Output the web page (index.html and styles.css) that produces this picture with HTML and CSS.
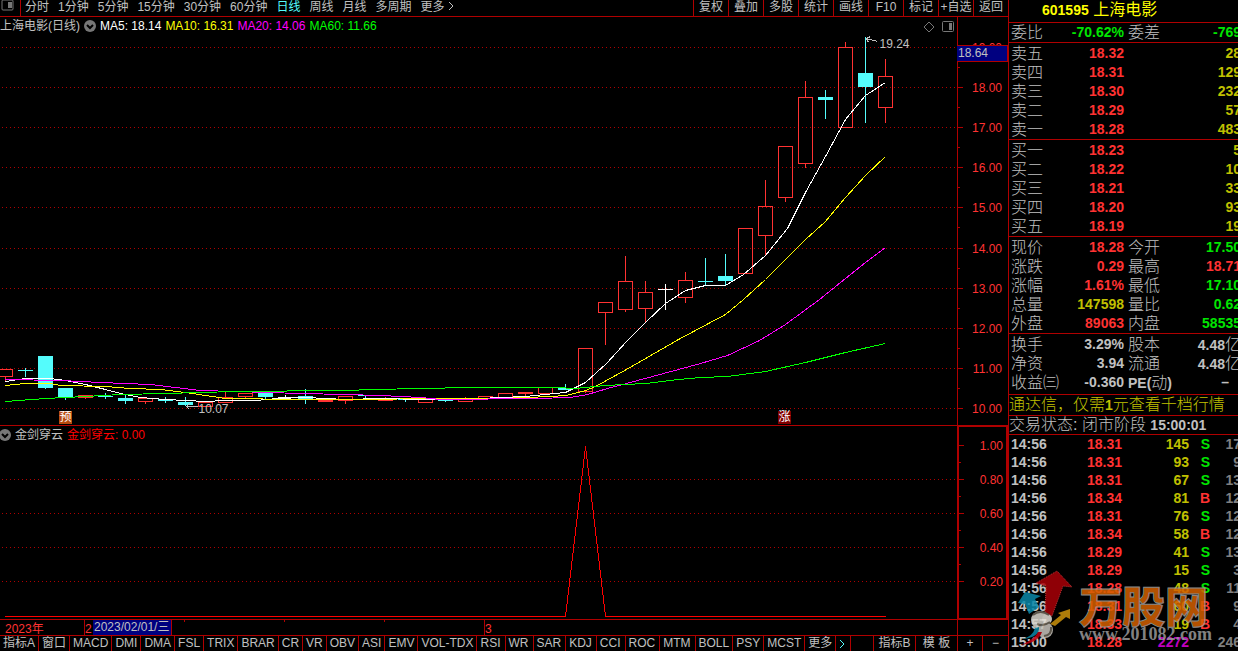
FILE: index.html
```html
<!DOCTYPE html>
<html lang="zh-CN">
  <head>
    <meta charset="UTF-8" />
    <meta name="viewport" content="width=device-width, initial-scale=1.0" />
    <title>601595 上海电影</title>
    <link rel="stylesheet" href="styles.css">
  </head>
  <body>
    <div class="app">
      <main class="main">
        <nav class="toolbar">
          <button class="layout-btn" aria-label="布局">
            <svg width="14" height="12"><rect x="2" y="0" width="11" height="10" rx="1" fill="none" stroke="#777" /><rect x="8" y="2" width="4" height="6" fill="#777" /></svg>
          </button>
          <div class="periods">
            <button>分时</button>
            <button>1分钟</button>
            <button>5分钟</button>
            <button>15分钟</button>
            <button>30分钟</button>
            <button>60分钟</button>
            <button class="active">日线</button>
            <button>周线</button>
            <button>月线</button>
            <button>多周期</button>
            <button>更多<svg class="chevron" width="7" height="10"><path d="M1 1L5 5L1 9" /></svg></button>
          </div>
          <div class="tools">
            <button>复权</button>
            <button>叠加</button>
            <button>多股</button>
            <button>统计</button>
            <button>画线</button>
            <button>F10</button>
            <button>标记</button>
            <button>+自选</button>
            <button>返回</button>
          </div>
        </nav>

        <section class="pane kline">
          <div class="plot">
            <svg id="kline" class="canvas"></svg>
            <div class="legend">
              <span>上海电影(日线)</span>
              <svg class="drop" width="12" height="12"><circle cx="6" cy="6" r="6" /><path d="M3 5L6 8L9 5" /></svg>
              <span class="ma5">MA5: 18.14</span>
              <span class="ma10">MA10: 16.31</span>
              <span class="ma20">MA20: 14.06</span>
              <span class="ma60">MA60: 11.66</span>
            </div>
            <div class="pane-icons">
              <svg width="12" height="12"><path d="M6 1L11 6L6 11L1 6Z" fill="none" stroke="#777" /></svg>
              <svg width="12" height="12"><rect x="0.5" y="0.5" width="11" height="10" rx="1" fill="none" stroke="#777" /><rect x="7" y="2" width="3" height="7" fill="#777" /></svg>
            </div>
            <span class="badge notice-badge">预</span>
            <span class="badge rise-badge">涨</span>
          </div>
          <div class="axis">
            <svg id="priceAxis" class="canvas"></svg>
            <span class="price-tag">18.64</span>
          </div>
        </section>

        <section class="pane indicator">
          <div class="plot">
            <svg id="signal" class="canvas"></svg>
            <div class="legend sub">
              <svg class="drop" width="12" height="12"><circle cx="6" cy="6" r="6" /><path d="M3 5L6 8L9 5" /></svg>
              <span>金剑穿云</span>
              <span class="sig">金剑穿云: 0.00</span>
            </div>
          </div>
          <div class="axis boxed"><svg id="signalAxis" class="canvas"></svg></div>
        </section>

        <div class="dates">
          <div class="timeline">
            <svg id="timeline" class="canvas"></svg>
            <span class="date-tag">2023/02/01/三</span>
          </div>
          <button class="period-name">日线</button>
        </div>

        <nav class="tabs">
          <button>指标A</button>
          <button>窗口</button>
          <button>MACD</button>
          <button>DMI</button>
          <button>DMA</button>
          <button>FSL</button>
          <button>TRIX</button>
          <button>BRAR</button>
          <button>CR</button>
          <button>VR</button>
          <button>OBV</button>
          <button>ASI</button>
          <button>EMV</button>
          <button>VOL-TDX</button>
          <button class="wide">RSI</button>
          <button class="wide">WR</button>
          <button class="wide">SAR</button>
          <button class="wide">KDJ</button>
          <button class="wide">CCI</button>
          <button class="wide">ROC</button>
          <button class="wide">MTM</button>
          <button>BOLL</button>
          <button>PSY</button>
          <button>MCST</button>
          <button>更多</button>
          <button class="next" aria-label="下一页"><svg class="chevron" width="7" height="10"><path d="M1 1L5 5L1 9" /></svg></button>
          <div class="tabs-end">
            <button class="group">指标B</button>
            <button class="group">模 板</button>
            <button class="zoom">+</button>
            <button class="zoom">−</button>
          </div>
        </nav>
      </main>

      <aside class="side">
        <h1 class="stock"><b>601595</b> 上海电影</h1>

        <table class="quote ratio">
          <tr><th>委比</th><td class="down">-70.62%</td><th>委差</th><td class="down">-769</td></tr>
        </table>

        <table class="quote">
          <tr><th>卖五</th><td class="up">18.32</td><th></th><td class="vol">28</td></tr>
          <tr><th>卖四</th><td class="up">18.31</td><th></th><td class="vol">129</td></tr>
          <tr><th>卖三</th><td class="up">18.30</td><th></th><td class="vol">232</td></tr>
          <tr><th>卖二</th><td class="up">18.29</td><th></th><td class="vol">57</td></tr>
          <tr><th>卖一</th><td class="up">18.28</td><th></th><td class="vol">483</td></tr>
        </table>

        <table class="quote">
          <tr><th>买一</th><td class="up">18.23</td><th></th><td class="vol">5</td></tr>
          <tr><th>买二</th><td class="up">18.22</td><th></th><td class="vol">10</td></tr>
          <tr><th>买三</th><td class="up">18.21</td><th></th><td class="vol">33</td></tr>
          <tr><th>买四</th><td class="up">18.20</td><th></th><td class="vol">93</td></tr>
          <tr><th>买五</th><td class="up">18.19</td><th></th><td class="vol">19</td></tr>
        </table>

        <table class="quote">
          <tr><th>现价</th><td class="up">18.28</td><th>今开</th><td class="down">17.50</td></tr>
          <tr><th>涨跌</th><td class="up">0.29</td><th>最高</th><td class="up">18.71</td></tr>
          <tr><th>涨幅</th><td class="up">1.61%</td><th>最低</th><td class="down">17.10</td></tr>
          <tr><th>总量</th><td class="vol">147598</td><th>量比</th><td class="down">0.62</td></tr>
          <tr><th>外盘</th><td class="up">89063</td><th>内盘</th><td class="down">58535</td></tr>
        </table>

        <table class="quote finance">
          <tr><th>换手</th><td>3.29%</td><th>股本</th><td>4.48<i>亿</i></td></tr>
          <tr><th>净资</th><td>3.94</td><th>流通</th><td>4.48<i>亿</i></td></tr>
          <tr><th>收益㈢</th><td>-0.360</td><th><b>PE(</b>动<b>)</b></th><td class="none">–</td></tr>
        </table>

        <p class="notice">通达信，仅需<b>1</b>元查看千档行情</p>
        <p class="status">交易状态: 闭市阶段 <b>15:00:01</b></p>

        <div class="trades">
          <table class="ticks">
            <tr><td>14:56</td><td class="up">18.31</td><td class="vol">145</td><td class="down">S</td><td>17</td></tr>
            <tr><td>14:56</td><td class="up">18.31</td><td class="vol">93</td><td class="down">S</td><td>9</td></tr>
            <tr><td>14:56</td><td class="up">18.31</td><td class="vol">67</td><td class="down">S</td><td>13</td></tr>
            <tr><td>14:56</td><td class="up">18.34</td><td class="vol">81</td><td class="up">B</td><td>12</td></tr>
            <tr><td>14:56</td><td class="up">18.31</td><td class="vol">76</td><td class="down">S</td><td>12</td></tr>
            <tr><td>14:56</td><td class="up">18.34</td><td class="vol">58</td><td class="up">B</td><td>12</td></tr>
            <tr><td>14:56</td><td class="up">18.29</td><td class="vol">41</td><td class="down">S</td><td>13</td></tr>
            <tr><td>14:56</td><td class="up">18.29</td><td class="vol">15</td><td class="down">S</td><td>3</td></tr>
            <tr><td>14:56</td><td class="up">18.28</td><td class="vol">48</td><td class="down">S</td><td>11</td></tr>
            <tr><td>14:56</td><td class="up">18.31</td><td class="vol">60</td><td class="up">B</td><td>9</td></tr>
            <tr><td>14:57</td><td class="up">18.33</td><td class="vol">19</td><td class="up">B</td><td>4</td></tr>
            <tr><td>15:00</td><td class="up">18.28</td><td class="big">2272</td><td></td><td>246</td></tr>
          </table>
          <div class="watermark">
            <svg class="logo" width="62" height="80" viewBox="0 0 62 80">
              <path d="M33 48L34 20L24 17L45 5L60 21L51 20L40 50Z" fill="#a80008" stroke="#d04040" stroke-dasharray="1 1" />
              <path d="M6 37L13 26L29 30L23 33L27 41L17 48L13 38Z" fill="#0a88a8" />
              <path d="M38 58L49 49L46 47L58 43V53L54 51L43 60Z" fill="#cc920c" />
              <circle cx="28" cy="54" r="9" fill="#d8d4cc" />
              <circle cx="33" cy="64" r="8" fill="#c8c4bc" />
              <circle cx="35" cy="53" r="5" fill="#e4e0d8" />
              <path d="M21 49Q28 43 37 49M25 58Q31 61 38 56M32 70Q40 69 39 61" fill="none" stroke="#6c6458" stroke-width="2" />
              <path d="M27 61Q28 71 11 73Q21 70 23 62Z" fill="#0a88a8" />
              <path d="M30 66Q26 77 9 79Q23 73 26 66Z" fill="#c00010" />
            </svg>
            <div class="brand">
              <span class="brand-name">万股网</span>
              <span class="brand-url">www.201082.com</span>
            </div>
          </div>
        </div>
      </aside>
    </div>

    <script>
      const RED = "#ff3232";
      const CYAN = "#54fcfc";
      const LINE = "#b00000";

      // [color, high, low, body top, body bottom], flat bodies are filled
      const candles = [
        ["r", 369, 381, 369, 376], ["c", 368, 376, 370, 370], ["c", 356, 388, 356, 387],
        ["c", 388, 399, 388, 396], ["f", 395, 398, 395, 397], ["c", 393, 398, 396, 396],
        ["c", 395, 403, 398, 400], ["r", 398, 403, 398, 401], ["c", 397, 402, 399, 400],
        ["c", 397, 405, 402, 404], ["r", 402, 406, 402, 406], ["r", 391, 402, 397, 402],
        ["r", 393, 397, 393, 396], ["c", 392, 398, 393, 396], ["w", 395, 397, 397, 397],
        ["c", 389, 403, 396, 399], ["f", 398, 401, 400, 401], ["r", 396, 403, 396, 400],
        ["c", 395, 397, 395, 395], ["r", 397, 400, 398, 400], ["c", 399, 401, 399, 399],
        ["r", 398, 402, 398, 402], ["c", 399, 401, 400, 400], ["r", 397, 401, 398, 401],
        ["r", 396, 398, 396, 398], ["r", 393, 397, 393, 397], ["f", 392, 395, 392, 393],
        ["r", 387, 393, 387, 393], ["c", 384, 389, 388, 389], ["r", 348, 392, 348, 391],
        ["r", 302, 344, 302, 312], ["r", 256, 311, 281, 309], ["r", 281, 322, 292, 308],
        ["w", 284, 309, 289, 289], ["r", 272, 302, 280, 297], ["c", 258, 285, 281, 281],
        ["c", 254, 285, 276, 280], ["r", 228, 273, 228, 273], ["r", 180, 255, 206, 235],
        ["r", 146, 201, 146, 197], ["r", 81, 167, 97, 163], ["c", 90, 118, 97, 99],
        ["r", 42, 127, 47, 127], ["c", 37, 122, 73, 86], ["r", 59, 122, 76, 107]
      ];

      const averages = {
        "#fff": "5,381 25,378 50,378 65,380 85,384 105,389 120,393 140,397 165,399 185,400 205,401 225,400 255,400 277,398 305,397 325,398 345,399 380,398 395,398 410,399 480,398 500,397 525,396 545,394 565,392 585,382 606,363 626,341 645,322 665,303 685,290 705,285 725,285 743,274 765,255 787,228 805,192 825,156 845,119 865,95 885,82",
        "#ff0": "5,385 25,383 50,383 60,385 105,386 130,388 160,389 185,392 205,395 225,398 300,399 500,398 525,397 550,396 566,395 585,390 595,386 626,369 678,339 725,314 743,299 765,279 797,247 805,239 825,221 845,197 865,175 885,156",
        "#f0f": "5,379 60,380 100,382 150,384 175,387 200,390 235,391 300,393 345,394 380,395 420,397 440,399 535,398 570,397 587,394 607,388 626,383 678,369 700,363 727,355 759,340 785,324 819,299 845,278 865,262 885,247",
        "#0f0": "5,401 45,398 85,396 120,394 165,393 200,392 235,391 340,390 415,388 475,387 555,387 575,388 605,385 645,383 678,379 700,377 727,376 765,371 805,362 845,352 885,343"
      };

      function line(x1, y1, x2, y2, color, dash) {
        return `<line x1="${x1}" y1="${y1}" x2="${x2}" y2="${y2}" stroke="${color}" ${dash ? 'stroke-dasharray="1 3"' : ""} />`;
      }

      // Main chart
      function drawKline() {
        let out = '<g transform="translate(0.5,-16.5)">';
        for (const y of [47, 87, 127, 167, 207, 248, 288, 328, 368, 408]) {
          out += line(1.5, y, "100%", y, LINE, true);
        }
        candles.forEach(([kind, high, low, top, bottom], i) => {
          const x = 5 + i * 20;
          const color = kind === "c" ? CYAN : kind === "w" ? "#fff" : RED;
          if (kind === "r") {
            out += line(x, high - 0.5, x, top, color) + line(x, bottom, x, low + 0.5, color);
            out += `<rect x="${x - 7}" y="${top}" width="14" height="${bottom - top}" fill="none" stroke="${color}" />`;
          } else {
            out += line(x, high - 0.5, x, low + 0.5, color);
            out += `<rect x="${x - 7.5}" y="${top - 0.5}" width="15" height="${bottom - top + 1}" fill="${color}" />`;
          }
        });
        for (const color in averages) {
          out += `<polyline points="${averages[color]}" fill="none" stroke="${color}" />`;
        }
        out += '<path d="M877 41L866 38M870 36L866 38L868 42M197 406H186M189 403L186 406L189 409" fill="none" stroke="#c0c0c0" />';
        out += '<text x="879" y="47">19.24</text><text x="198" y="412">10.07</text></g>';
        document.getElementById("kline").innerHTML = out;
      }

      function drawAxis(id, labels, top, step, shift) {
        let out = `<g transform="translate(0,${-shift + 0.5})">`;
        labels.forEach((label, i) => {
          const y = top + Math.round(i * step);
          out += line(0, y, 5, y, LINE);
          if (i < labels.length - 1) {
            out += line(0, y + Math.round(step / 2), 2, y + Math.round(step / 2), LINE);
          }
          out += `<text x="44" y="${y + 4}" text-anchor="end">${label}</text>`;
        });
        document.getElementById(id).innerHTML = out + "</g>";
      }

      function drawSignal() {
        let out = '<g transform="translate(0.5,-425.5)">';
        for (const y of [479, 513, 547, 581]) {
          out += line(1.5, y, "100%", y, LINE, true);
        }
        out += '<polyline points="4,616 565,616 585,446 605,616 885,616" fill="none" stroke="#f00" /></g>';
        document.getElementById("signal").innerHTML = out;
      }

      function drawTimeline() {
        let out = '<text x="5" y="13">2023年</text><text x="85" y="13">2</text><text x="485" y="13">3</text>';
        for (const x of [84.5, 484.5]) out += line(x, 0, x, 16, LINE);
        for (const x of [184.5, 284.5, 384.5]) out += line(x, 0, x, 2, LINE);
        document.getElementById("timeline").innerHTML = out;
      }

      drawKline();
      drawAxis("priceAxis", ["19.00", "18.00", "17.00", "16.00", "15.00", "14.00", "13.00", "12.00", "11.00", "10.00"], 47, 40.1, 17);
      drawSignal();
      drawAxis("signalAxis", ["1.00", "0.80", "0.60", "0.40", "0.20"], 445, 34, 427);
      drawTimeline();
    </script>
  </body>
</html>
```

FILE: styles.css
```css
* {
  box-sizing: border-box;
}
body {
  margin: 0;
  background-color: #000;
  color: #c0c0c0;
  font-family: "Liberation Sans", "Noto Sans CJK SC", sans-serif;
  font-size: 12px;
  overflow: hidden;
}
button {
  background: none;
  border: none;
  padding: 0;
  color: inherit;
  font: inherit;
  white-space: nowrap;
  cursor: pointer;
}
svg {
  display: block;
}
.app {
  display: grid;
  grid-template-columns: 1fr 230px;
  grid-template-rows: 100vh;
  height: 100vh;
  overflow: hidden;
}
.main {
  display: flex;
  flex-direction: column;
  min-width: 0;
}

/* top toolbar */
.toolbar {
  display: flex;
  height: 17px;
  border-bottom: 1px solid #b00000;
  line-height: 14px;
}
.toolbar button {
  display: flex;
  align-items: flex-start;
}
.layout-btn {
  width: 21px;
  border-right: 1px solid #b00000;
}
.periods {
  display: flex;
  gap: 9px;
  padding-left: 4px;
}
.periods .active {
  color: #54fcfc;
}
.chevron {
  fill: none;
  stroke: currentColor;
}
.periods .chevron {
  margin: 1px 0 0 3px;
}
.tools {
  display: flex;
  margin-left: auto;
}
.tools button {
  width: 35px;
  justify-content: center;
  border-left: 1px solid #b00000;
}

/* chart panes */
.pane {
  display: grid;
  grid-template-columns: 1fr 51px;
}
.kline {
  height: 409px;
  border-bottom: 1px solid #b00000;
}
.indicator {
  flex: 1;
}
.plot,
.axis,
.timeline {
  position: relative;
  min-width: 0;
}
.canvas {
  width: 100%;
  height: 100%;
  fill: #ff3232;
  overflow: hidden;
  shape-rendering: crispEdges;
}
#kline text {
  fill: #c0c0c0;
}
.axis {
  border-left: 1px solid #b00000;
}
.axis.boxed {
  border: 2px solid #b00000;
  border-top-width: 1px;
  border-bottom-width: 1px;
}
.legend {
  position: absolute;
  top: 1px;
  left: 0;
  display: flex;
  align-items: center;
  gap: 4px;
  line-height: 16px;
  white-space: nowrap;
}
.legend.sub {
  left: -1px;
}
.drop {
  fill: #777;
}
.drop path {
  fill: none;
  stroke: #000;
  stroke-width: 2;
}
.ma5 {
  color: #fff;
}
.ma10 {
  color: #ff0;
}
.ma20 {
  color: #f0f;
}
.ma60 {
  color: #0f0;
}
.sig {
  color: #f00;
}
.pane-icons {
  position: absolute;
  top: 4px;
  right: 3px;
  display: flex;
  gap: 7px;
}
.badge {
  position: absolute;
  top: 394px;
  width: 13px;
  height: 13px;
  line-height: 13px;
  text-align: center;
  color: #fff;
}
.notice-badge {
  left: 59px;
  background-color: #b84a0e;
}
.rise-badge {
  left: 778px;
  background-color: #800000;
}
.price-tag {
  position: absolute;
  top: 28px;
  left: -1px;
  right: 0;
  height: 17px;
  border: 1px solid #b00000;
  border-left: none;
  background-color: #000080;
  line-height: 15px;
  padding-left: 1px;
}

/* date line and indicator tabs */
.dates {
  display: grid;
  grid-template-columns: 1fr 51px;
  height: 16px;
  border-top: 1px solid #b00000;
}
.date-tag {
  position: absolute;
  top: 0;
  left: 93px;
  width: 79px;
  height: 15px;
  line-height: 15px;
  padding-left: 1px;
  background-color: #000080;
  border-right: 1px solid #b00000;
  white-space: nowrap;
}
.period-name {
  border-left: 1px solid #b00000;
  line-height: 15px;
}
.tabs {
  display: flex;
  height: 16px;
  border-top: 1px solid #b00000;
  line-height: 15px;
}
.tabs button {
  padding: 0 3px;
  border-right: 1px solid #b00000;
}
.tabs .wide {
  padding-right: 4px;
}
.tabs .next {
  display: flex;
  align-items: center;
  color: #54fcfc;
  width: 15px;
}
.tabs-end {
  display: flex;
  margin-left: auto;
  border-left: 1px solid #b00000;
}
.tabs-end .group {
  width: 42px;
}
.tabs-end .zoom {
  width: 25px;
}
.tabs-end .zoom:last-child {
  border-right: none;
}

/* quote panel */
.side {
  border-left: 1px solid #b00000;
  overflow: hidden;
  font-size: 16px;
}
.side > * {
  margin: 0;
  border-bottom: 1px solid #b00000;
  white-space: nowrap;
}
.side b,
.side td {
  font-size: 14px;
  font-weight: bold;
}
.stock {
  height: 23px;
  padding-left: 33px;
  font-size: 16px;
  font-weight: normal;
  line-height: 20px;
  color: #ff0;
}
.quote {
  display: block;
  padding: 1px 0 0 2px;
  border-spacing: 0;
}
.quote tr {
  display: grid;
  grid-template-columns: 48px 65px 48px 69px;
  height: 19px;
  line-height: 19px;
}
.quote th {
  padding: 0;
  font-weight: 300;
  text-align: left;
}
.quote th:nth-child(3) {
  padding-left: 4px;
}
.quote td {
  padding: 0;
  text-align: right;
}
.quote i {
  font-size: 16px;
  font-style: normal;
  font-weight: 300;
}
.quote .none {
  padding-right: 12px;
}
.ratio {
  padding-top: 0;
}
.finance {
  padding-bottom: 2px;
}
.up {
  color: #ff3232;
}
.down {
  color: #00e600;
}
.vol {
  color: #c0c000;
}
.big {
  color: #c000c0;
}
.notice {
  height: 21px;
  line-height: 19px;
  color: #c0c000;
  font-weight: 300;
}
.status {
  height: 19px;
  line-height: 18px;
  font-weight: 300;
}
.side .trades {
  position: relative;
  border-bottom: none;
}
.ticks {
  width: 232px;
  table-layout: fixed;
  border-spacing: 0;
}
.ticks td {
  height: 18px;
  line-height: 18px;
  padding: 0;
  text-align: right;
}
.ticks td:nth-child(1) {
  width: 48px;
  padding-left: 2px;
  text-align: left;
}
.ticks td:nth-child(2) {
  width: 65px;
}
.ticks td:nth-child(3) {
  width: 67px;
}
.ticks td:nth-child(4) {
  width: 21px;
}
.ticks td:nth-child(5) {
  width: 31px;
  color: #808080;
}
.watermark {
  position: absolute;
  top: 131px;
  left: 3px;
  display: flex;
  opacity: 0.85;
}
.brand {
  display: flex;
  flex-direction: column;
  padding: 16px 0 0 5px;
}
.brand-name {
  font-family: "Noto Sans CJK SC", sans-serif;
  font-size: 43px;
  font-weight: 900;
  line-height: 44px;
  color: #d46000;
  -webkit-text-stroke: 1px #a0a0a0;
}
.brand-url {
  font-family: "Liberation Serif", serif;
  font-size: 18px;
  font-weight: bold;
  line-height: 16px;
  color: #999;
}
```
